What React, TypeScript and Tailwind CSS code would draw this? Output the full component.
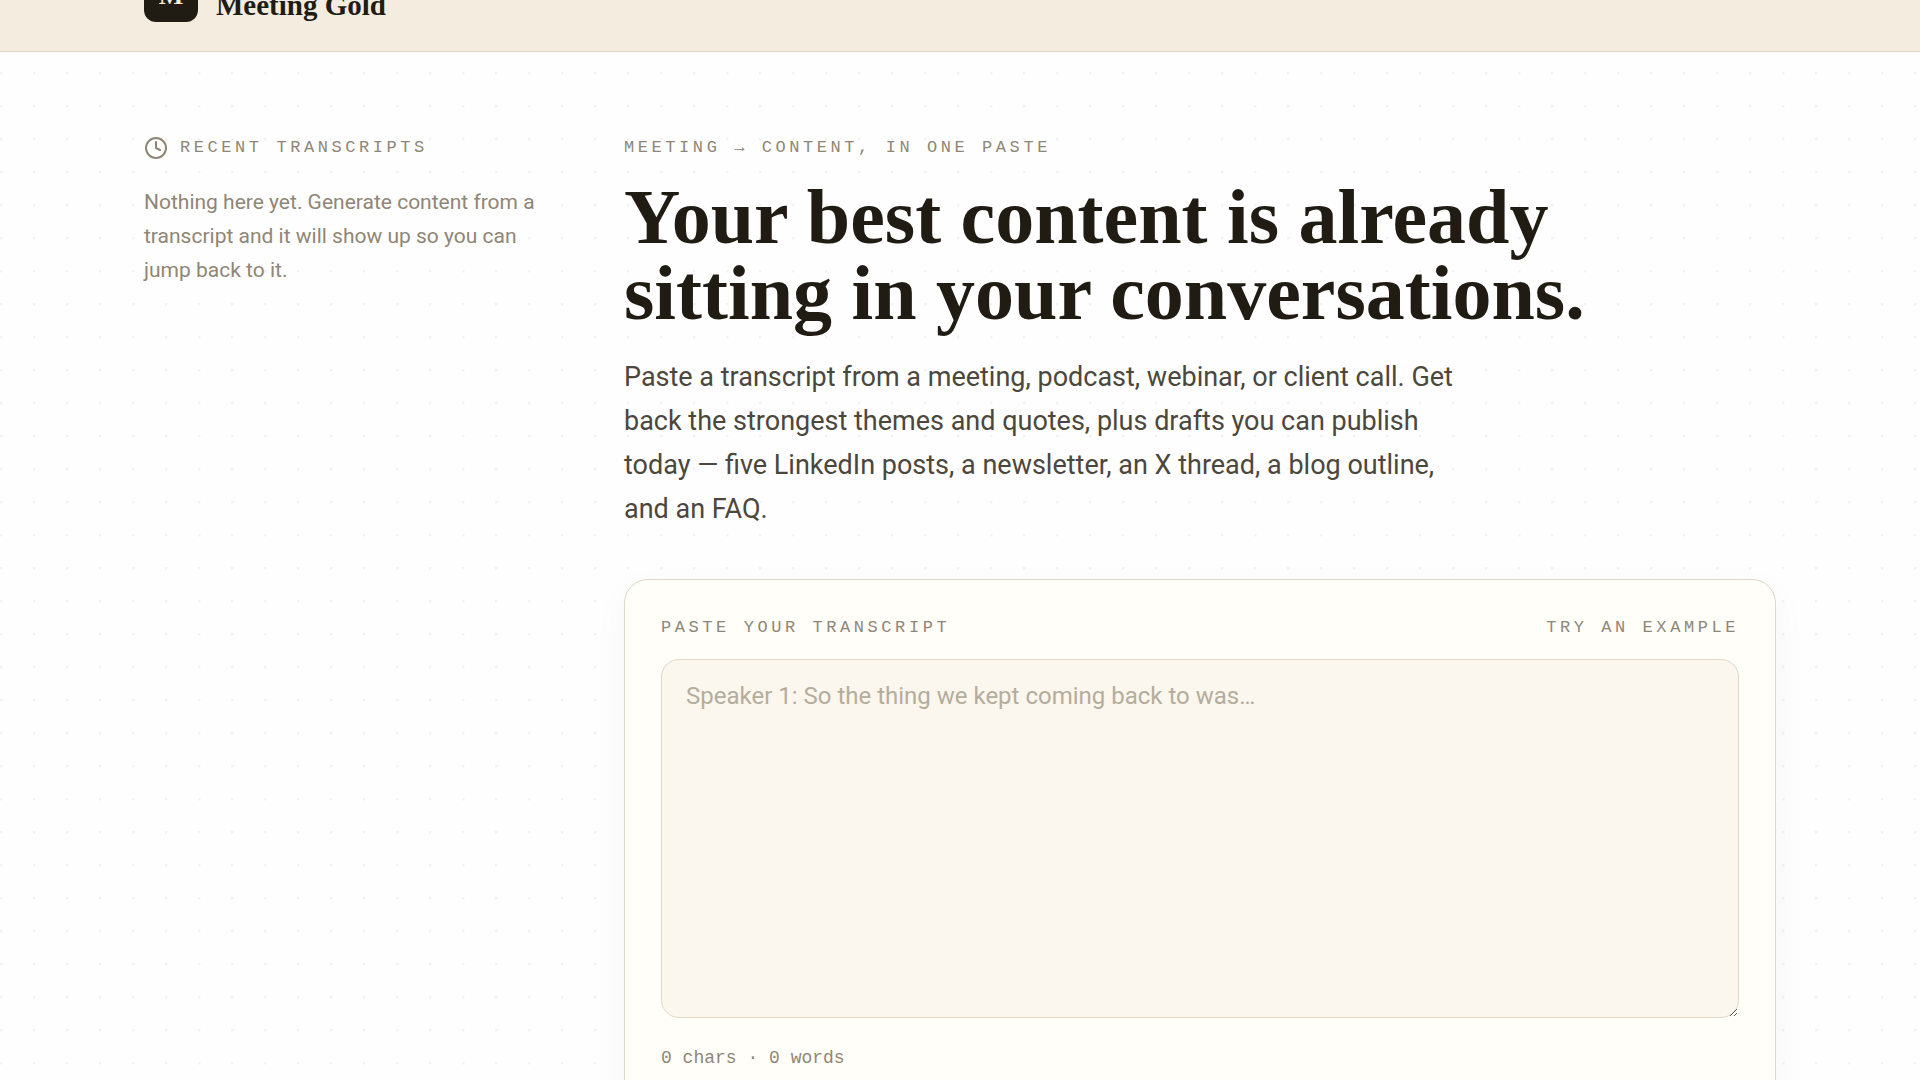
import { useState } from 'react'
import { Clock } from 'lucide-react'

const SERIF = "font-['Liberation_Serif',serif]"
const LABEL = "font-['Liberation_Mono',monospace] text-[17px] leading-6 tracking-[0.21em] uppercase text-[#8f8676]"

function Header() {
  return (
    <header className="-mt-[61px] border-b border-[#dfd5c5] bg-[#f4ecdf] px-36 pt-[29px] pb-[29px]">
      <a href="#top" className="flex w-fit items-end gap-[18px] text-[#211c13]">
        <span className={`${SERIF} flex size-[54px] items-center justify-center rounded-xl bg-[#211c13] text-[26px] font-bold text-[#f4ecdf]`}>
          M
        </span>
        <span className={`${SERIF} text-[29px] leading-[34px] font-bold`}>Meeting Gold</span>
      </a>
    </header>
  )
}

function RecentTranscripts() {
  return (
    <aside className="w-[400px] shrink-0">
      <h2 className={`${LABEL} flex items-center gap-3`}>
        <Clock size={24} strokeWidth={2} aria-hidden="true" />
        Recent transcripts
      </h2>
      <p className="mt-[25px] text-[21px] leading-[34px] text-[#8f8676]">
        Nothing here yet. Generate content from a transcript and it will show up so you can jump back to it.
      </p>
    </aside>
  )
}

function TranscriptForm() {
  const [text, setText] = useState('')
  const words = text.trim() ? text.trim().split(/\s+/).length : 0
  return (
    <form className="mt-12 rounded-3xl border border-[#e0d7c6] bg-[#fffef9] p-9 shadow-[0_12px_36px_rgba(33,28,60,0.04)]">
      <div className="flex items-center justify-between">
        <label htmlFor="transcript" className={LABEL}>
          Paste your transcript
        </label>
        <button type="button" className={LABEL} onClick={() => setText('Speaker 1: So the thing we kept coming back to was trust.')}>
          Try an example
        </button>
      </div>
      <textarea
        id="transcript"
        value={text}
        onChange={(e) => setText(e.target.value)}
        placeholder="Speaker 1: So the thing we kept coming back to was…"
        className="mt-[19px] block h-[359px] w-full resize-y rounded-[18px] border border-[#e0d7c6] bg-[#fbf6ee] px-6 py-[17px] text-2xl leading-[38px] text-[#211c13] placeholder:text-[#b5ad9b]"
      />
      <p className="mt-7 font-['Liberation_Mono',monospace] text-lg leading-6 text-[#8f8676]">
        {text.length} chars · {words} words
      </p>
    </form>
  )
}

export default function App() {
  return (
    <div
      id="top"
      className="flex min-h-screen flex-col bg-[#fefefe] bg-[radial-gradient(circle_at_1px_1px,#f2f2f2_1px,transparent_2px)] bg-[length:33px_33px] bg-[position:0_6px] font-['Roboto',sans-serif]"
    >
      <Header />
      <div className="flex gap-20 px-36 pt-[84px] pb-24">
        <RecentTranscripts />
        <main className="min-w-0 flex-1">
          <p className={LABEL}>Meeting → content, in one paste</p>
          <h1 className={`${SERIF} mt-[19px] max-w-[1040px] text-[78px] leading-[76px] font-bold text-[#211c13]`}>
            Your best content is already sitting in your conversations.
          </h1>
          <p className="mt-6 max-w-[850px] text-[27px] leading-[44px] text-[#4c473c]">
            Paste a transcript from a meeting, podcast, webinar, or client call. Get back the strongest themes and
            quotes, plus drafts you can publish today — five LinkedIn posts, a newsletter, an X thread, a blog outline,
            and an FAQ.
          </p>
          <TranscriptForm />
        </main>
      </div>
    </div>
  )
}
